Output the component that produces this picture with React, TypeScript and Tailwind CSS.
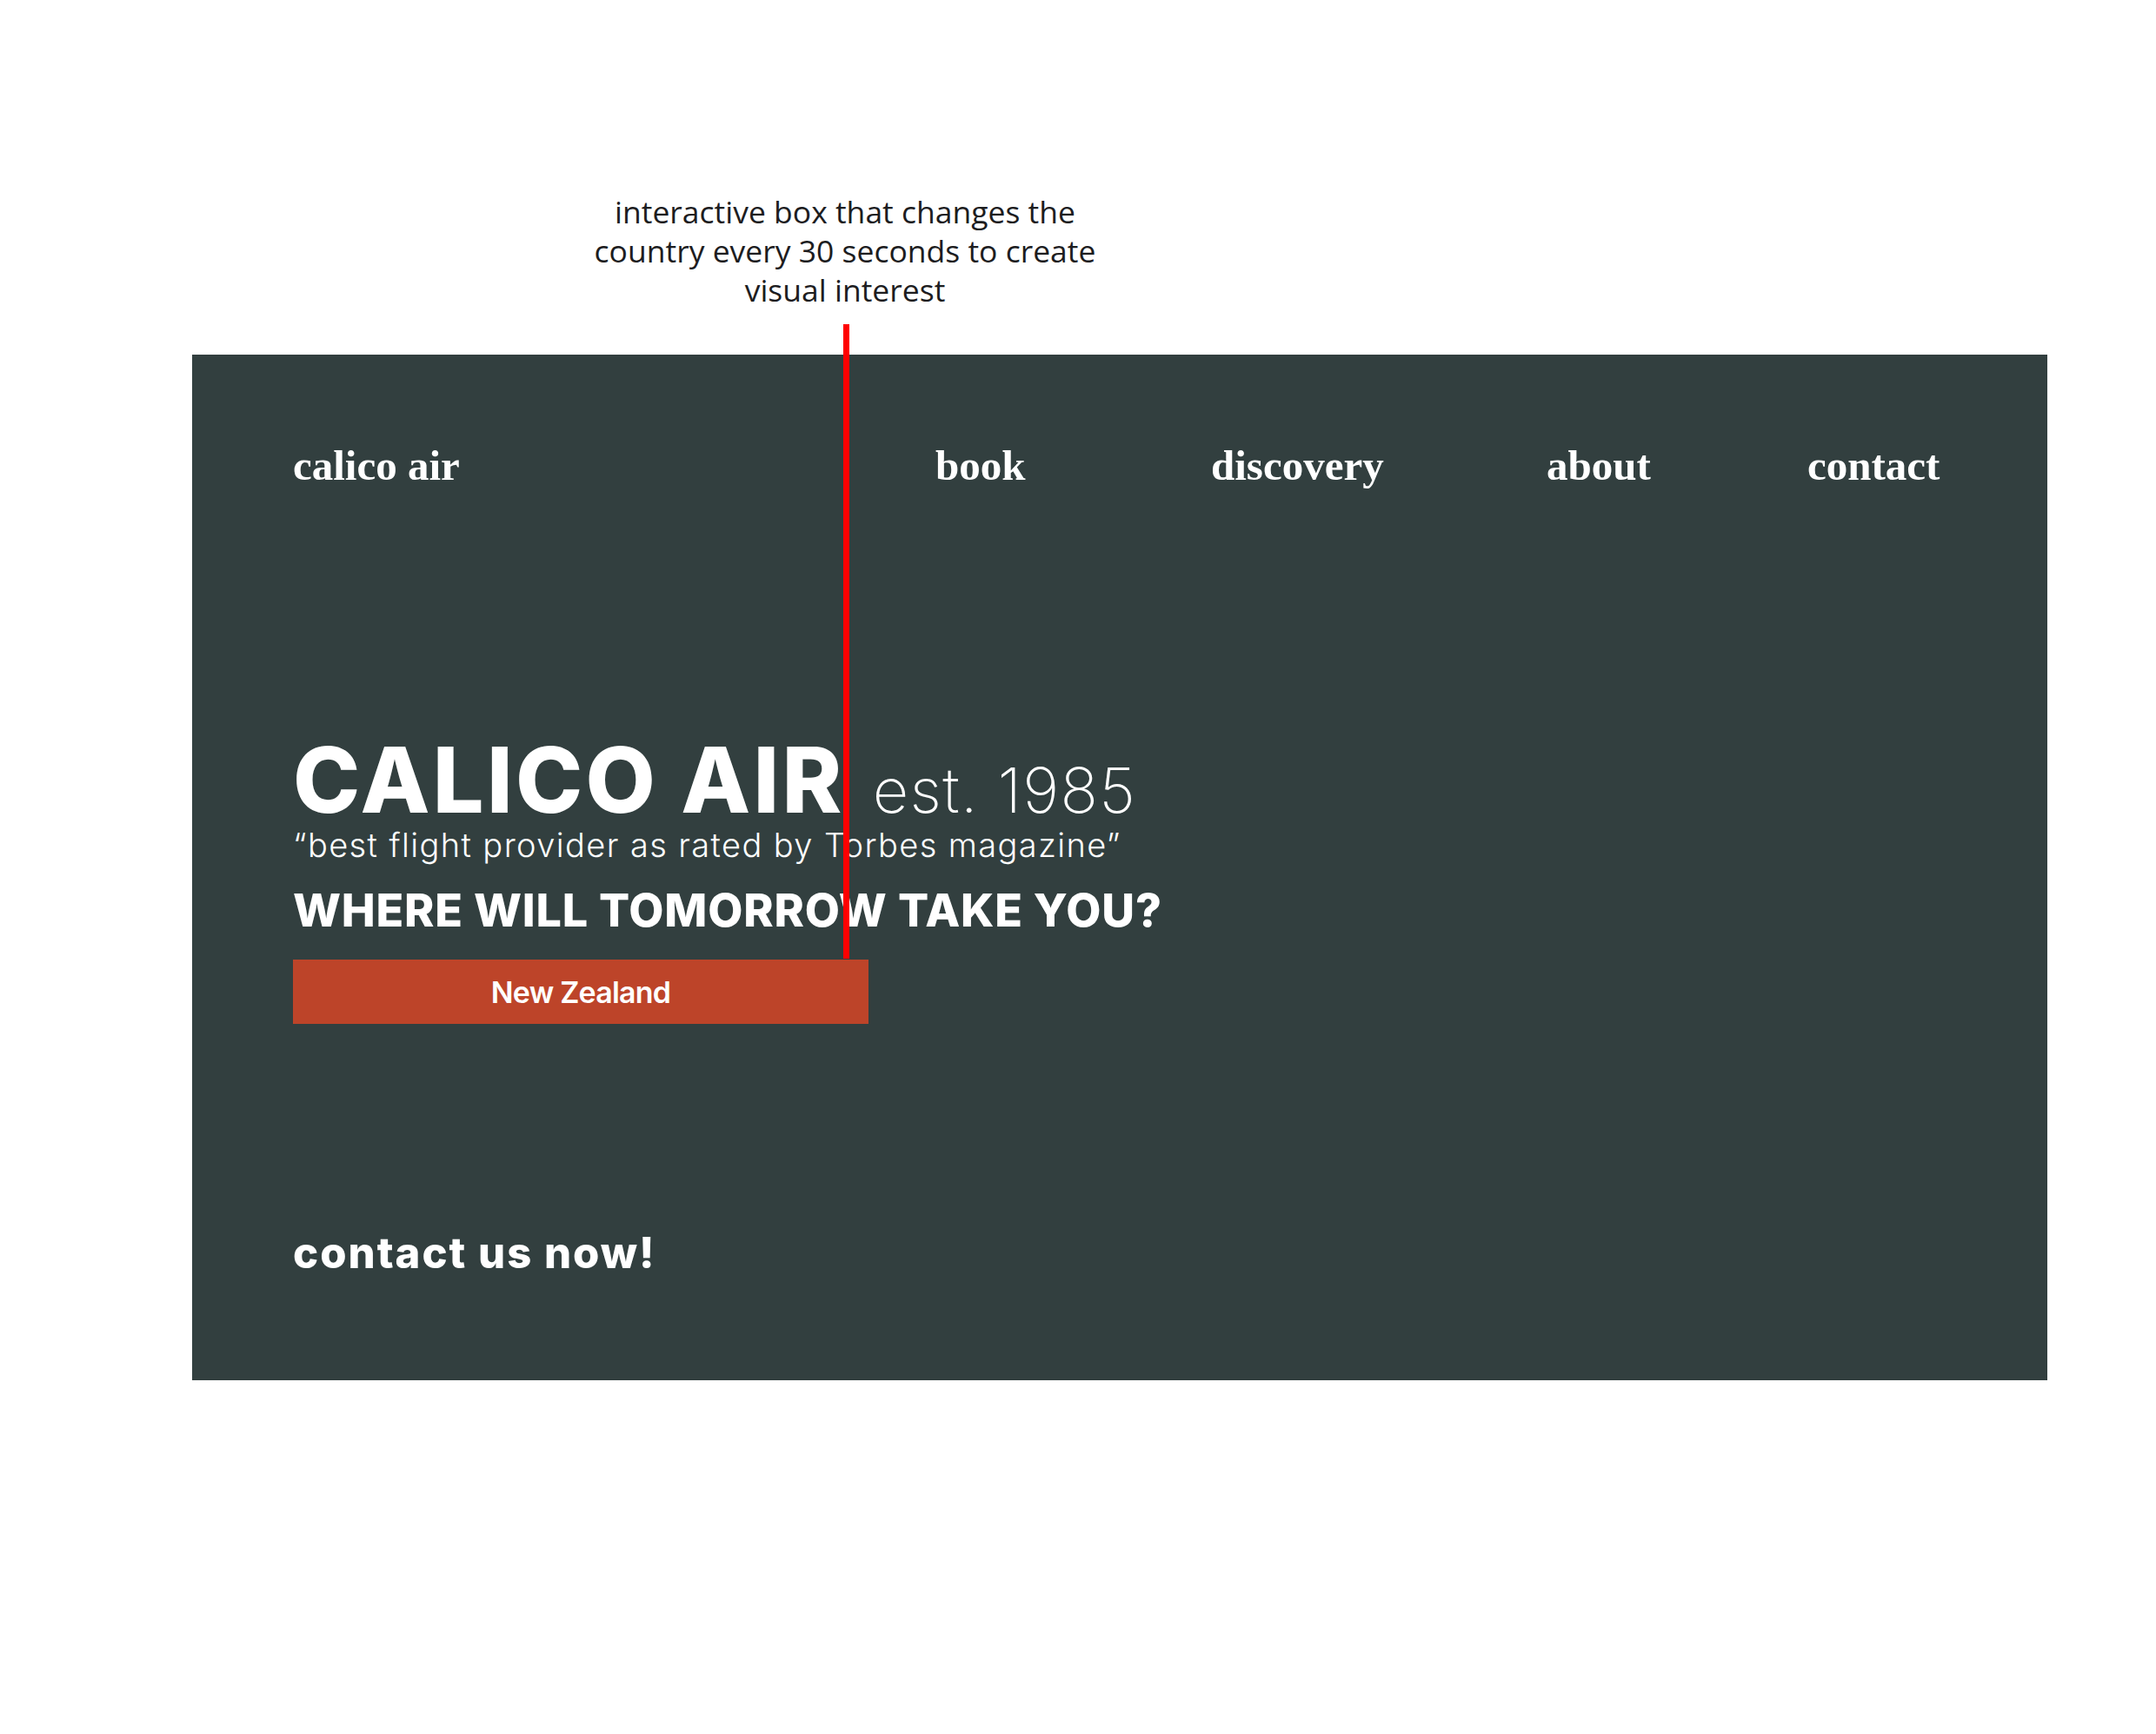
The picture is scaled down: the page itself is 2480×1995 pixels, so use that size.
export default function App() {
  const navItems = [
    { label: "book", w: "w-[317px]" },
    { label: "discovery", w: "w-[386px]" },
    { label: "about", w: "w-[300px]" },
    { label: "contact", w: "" },
  ];

  return (
    <div className="relative min-h-[1995px] w-[2480px] bg-white">
      {/* Annotation */}
      <div className="ml-[572px] w-[800px] pt-[221px] text-center text-[35.5px] leading-[45px] text-[#1d1d1f] [font-family:'Open_Sans',Roboto,sans-serif]">
        <p>interactive box that changes the</p>
        <p>country every 30 seconds to create</p>
        <p>visual interest</p>
      </div>

      {/* Hero panel */}
      <div className="ml-[221px] mt-[52px] flex h-[1180px] w-[2134px] flex-col bg-[#323f3f] pl-[116px] pt-[98px] text-white">
        <nav className="flex text-[49px] leading-[60px] font-bold [font-family:'Liberation_Serif',serif]">
          <span className="w-[739px]">calico air</span>
          {navItems.map((item) => (
            <span key={item.label} className={item.w}>
              {item.label}
            </span>
          ))}
        </nav>

        <div className="mt-[279px] flex flex-col items-start [font-family:Inter,'Liberation_Sans',sans-serif]">
          <h1 className="text-[104px] leading-[104px] font-extrabold tracking-[3.3px]">
            CALICO AIR
            <span className="ml-[32px] text-[72px] leading-none font-extralight tracking-[1.3px]">est. 1985</span>
          </h1>
          <p className="text-[38px] leading-[46px] font-light tracking-[1.4px]">
            “best flight provider as rated by Torbes magazine”
          </p>
          <h2 className="mt-[21px] text-[52px] leading-[63px] font-extrabold tracking-[0.8px]">
            WHERE WILL TOMORROW TAKE YOU?
          </h2>
          <button className="mt-[25px] flex h-[74px] w-[662px] items-center justify-center bg-[#bd4429] text-[34px] font-semibold tracking-[-0.8px] text-white">
            New Zealand
          </button>
          <p className="mt-[235px] text-[49px] leading-[58px] font-extrabold tracking-[2px]">contact us now!</p>
        </div>
      </div>

      {/* Callout line */}
      <div className="absolute left-[970px] top-[373px] h-[730px] w-[7px] bg-[#ff0000]" />
    </div>
  );
}
